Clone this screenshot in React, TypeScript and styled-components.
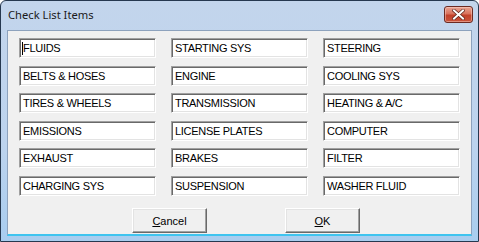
import React from 'react';
import styled, { createGlobalStyle } from 'styled-components';

const GlobalStyle = createGlobalStyle`
  html, body {
    margin: 0;
    padding: 0;
    background: #ffffff;
  }
`;

const items = [
  'FLUIDS', 'STARTING SYS', 'STEERING',
  'BELTS & HOSES', 'ENGINE', 'COOLING SYS',
  'TIRES & WHEELS', 'TRANSMISSION', 'HEATING & A/C',
  'EMISSIONS', 'LICENSE PLATES', 'COMPUTER',
  'EXHAUST', 'BRAKES', 'FILTER',
  'CHARGING SYS', 'SUSPENSION', 'WASHER FLUID',
];

const Window = styled.div`
  box-sizing: border-box;
  width: 479px;
  height: 242px;
  display: flex;
  flex-direction: column;
  border: 1px solid #26384f;
  border-radius: 6px 6px 0 0;
  background: linear-gradient(to bottom, #c3d5ec 0%, #bcd3ee 60%, #a9cdef 100%);
  padding: 0 6px 5px 6px;
`;

const TitleBar = styled.div`
  height: 29px;
  display: flex;
  align-items: center;
  justify-content: space-between;
  padding-left: 1px;
`;

const Title = styled.span`
  font-family: "Noto Sans", "Open Sans", sans-serif;
  font-size: 11.2px;
  color: #1a1a1a;
  margin-top: -2px;
`;

const CloseButton = styled.div`
  box-sizing: border-box;
  width: 29px;
  height: 17px;
  margin-right: -1px;
  margin-top: -3px;
  border: 1px solid #6b2a22;
  border-radius: 3px;
  background: linear-gradient(to bottom, #e8a493 0%, #d9725d 45%, #c2412a 55%, #c9543c 100%);
  box-shadow: inset 0 0 0 1px rgba(255, 220, 210, 0.45);
  display: flex;
  align-items: center;
  justify-content: center;
`;

const Client = styled.div`
  flex: 1;
  background: #f0f0f0;
  border: 1px solid #8da2bd;
  border-bottom: 2px solid #3fc4ef;
  display: flex;
  flex-direction: column;
  padding: 7px 0 0 11px;
`;

const Grid = styled.div`
  display: grid;
  grid-template-columns: repeat(3, 137px);
  grid-auto-rows: 27.6px;
  column-gap: 15px;
`;

const Field = styled.div`
  position: relative;
  box-sizing: border-box;
  height: 20px;
  background: #ffffff;
  border-top: 1px solid #a0a0a0;
  border-left: 1px solid #a0a0a0;
  border-right: 1px solid #ffffff;
  border-bottom: 1px solid #ffffff;
  box-shadow: inset 1px 1px 0 #696969, inset -1px -1px 0 #e3e3e3;
  font-family: "Liberation Sans", Arial, sans-serif;
  font-size: 11px;
  letter-spacing: -0.3px;
  line-height: 18px;
  padding-left: 3px;
  color: #000000;
  white-space: nowrap;
`;

const Caret = styled.span`
  position: absolute;
  left: 2px;
  top: 3px;
  width: 1px;
  height: 13px;
  background: #000000;
`;

const ButtonRow = styled.div`
  display: flex;
  margin-top: auto;
  margin-bottom: 1px;
  padding-left: 113px;
  gap: 78px;
`;

const Button = styled.div`
  box-sizing: border-box;
  width: 75px;
  height: 25px;
  background: #f0f0f0;
  border-top: 1px solid #ffffff;
  border-left: 1px solid #ffffff;
  border-right: 1px solid #696969;
  border-bottom: 1px solid #696969;
  box-shadow: inset -1px -1px 0 #a0a0a0, inset 1px 1px 0 #e3e3e3;
  display: flex;
  align-items: center;
  justify-content: center;
  font-family: "Liberation Sans", Arial, sans-serif;
  font-size: 11px;
  color: #000000;

  u {
    text-decoration: underline;
    text-underline-offset: 1px;
  }
`;

export default function App() {
  return (
    <>
      <GlobalStyle />
      <Window>
        <TitleBar>
          <Title>Check List Items</Title>
          <CloseButton>
            <svg width="13" height="11" viewBox="0 0 13 11">
              <path d="M2 1.5 L11 9.5 M11 1.5 L2 9.5" stroke="#5a2018" strokeWidth="3.4" strokeLinecap="square" />
              <path d="M2 1.5 L11 9.5 M11 1.5 L2 9.5" stroke="#ffffff" strokeWidth="2" strokeLinecap="square" />
            </svg>
          </CloseButton>
        </TitleBar>
        <Client>
          <Grid>
            {items.map((item, i) => (
              <div key={item}>
                <Field>
                  {i === 0 && <Caret />}
                  {item}
                </Field>
              </div>
            ))}
          </Grid>
          <ButtonRow>
            <Button><span><u>C</u>ancel</span></Button>
            <Button><span><u>O</u>K</span></Button>
          </ButtonRow>
        </Client>
      </Window>
    </>
  );
}
